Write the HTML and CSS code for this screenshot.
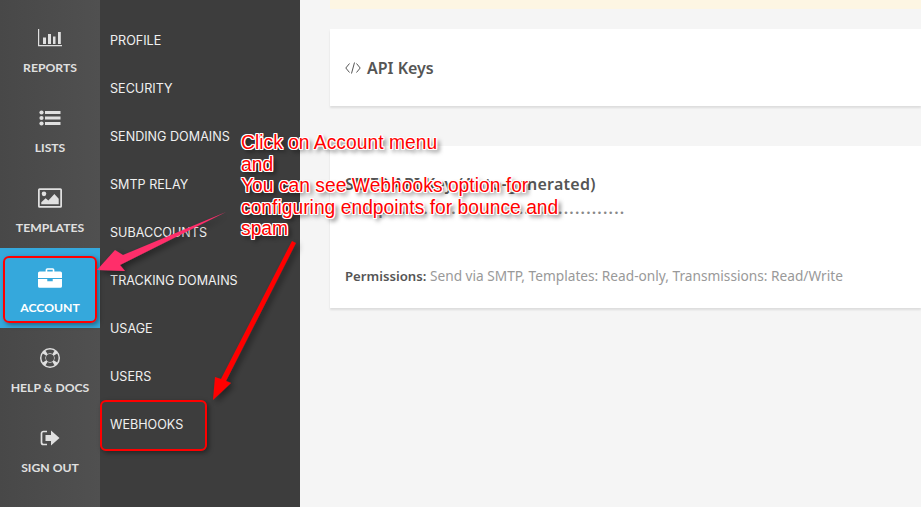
FILE: index.html
```html
<!DOCTYPE html>
<html lang="en">
<head>
<meta charset="utf-8">
<title>Account menu</title>
<link rel="stylesheet" href="styles.css">
</head>
<body>
<div class="app">
  <nav class="rail">
    <a class="rail-item">
      <svg class="rail-icon" viewBox="0 0 24 20"><path d="M0.600 1v16.700H24" fill="none" stroke="currentColor" stroke-width="1.200"/><path d="M5 9.500h3v6.500H5zM10 6h3v10h-3zM15 8.500h2.500V16H15zM20 4h2.800v12H20z" fill="currentColor"/></svg>
      <span>REPORTS</span>
    </a>
    <a class="rail-item">
      <svg class="rail-icon" viewBox="0 0 24 20"><circle cx="3.500" cy="4.500" r="2.100" fill="currentColor"/><circle cx="3.500" cy="10" r="2.100" fill="currentColor"/><circle cx="3.500" cy="15.500" r="2.100" fill="currentColor"/><path d="M7 3h15.500v3H7zM7 8.500h15.500v3H7zM7 14h15.500v3H7z" fill="currentColor"/></svg>
      <span>LISTS</span>
    </a>
    <a class="rail-item">
      <svg class="rail-icon" viewBox="0 0 22 18"><path fill-rule="evenodd" d="M1.500 0h19A1.500 1.500 0 0 1 22 1.500v15a1.500 1.500 0 0 1-1.500 1.500h-19A1.500 1.500 0 0 1 0 16.500v-15A1.500 1.500 0 0 1 1.500 0zM1.600 1.600v14.800h18.800V1.600z" fill="currentColor"/><circle cx="5.500" cy="5.200" r="2.100" fill="currentColor"/><path d="M3 14.800v-2l4-3.500 2.500 2 5.500-6 4 4.500v5z" fill="currentColor"/></svg>
      <span>TEMPLATES</span>
    </a>
    <a class="rail-item is-active">
      <svg class="rail-icon" viewBox="0 0 22 18"><path fill-rule="evenodd" d="M7 3V1.500A1.500 1.500 0 0 1 8.500 0h5A1.500 1.500 0 0 1 15 1.500V3h5.500A1.500 1.500 0 0 1 22 4.500V9H0V4.500A1.500 1.500 0 0 1 1.500 3zM8.500 1.500V3h5V1.500z" fill="currentColor"/><path d="M0 10h8.500v2h5v-2H22v6.500a1.500 1.500 0 0 1-1.500 1.500h-19A1.500 1.500 0 0 1 0 16.500z" fill="currentColor"/></svg>
      <span>ACCOUNT</span>
    </a>
    <a class="rail-item">
      <svg class="rail-icon" viewBox="0 0 20 20"><path fill-rule="evenodd" d="M10 0a10 10 0 1 1 0 20a10 10 0 0 1 0-20zM10 6a4 4 0 1 0 0 8a4 4 0 0 0 0-8zM5.500 2.800l2 3.200a5 5 0 0 1 5 0l2-3.200a9 9 0 0 0-9 0zM2.800 5.500a9 9 0 0 0 0 9l3.200-2a5 5 0 0 1 0-5zM17.200 5.500l-3.200 2a5 5 0 0 1 0 5l3.200 2a9 9 0 0 0 0-9zM7.500 14l-2 3.200a9 9 0 0 0 9 0l-2-3.200a5 5 0 0 1-5 0z" fill="currentColor"/></svg>
      <span>HELP &amp; DOCS</span>
    </a>
    <a class="rail-item">
      <svg class="rail-icon" viewBox="0 0 24 20"><path d="M9 3.500H5.500A2 2 0 0 0 3.500 5.500v9a2 2 0 0 0 2 2H9" fill="none" stroke="currentColor" stroke-width="1.700"/><path d="M13 2.500l8.500 7.500-8.500 7.500V13H7.500V7H13z" fill="currentColor"/></svg>
      <span>SIGN OUT</span>
    </a>
  </nav>
  <nav class="submenu">
    <a class="sub-item">PROFILE</a>
    <a class="sub-item">SECURITY</a>
    <a class="sub-item">SENDING DOMAINS</a>
    <a class="sub-item">SMTP RELAY</a>
    <a class="sub-item">SUBACCOUNTS</a>
    <a class="sub-item">TRACKING DOMAINS</a>
    <a class="sub-item">USAGE</a>
    <a class="sub-item">USERS</a>
    <a class="sub-item">WEBHOOKS</a>
  </nav>
  <main class="content">
    <div class="notice"></div>
    <section class="card card-head">
      <h2 class="card-title"><svg class="code-icon" viewBox="0 0 16 12"><path d="M4.500 1.500L0.800 6l3.700 4.500M11.500 1.500L15.200 6l-3.700 4.500M9.500 0.500L6.500 11.500" fill="none" stroke="currentColor" stroke-width="1"/></svg>API Keys</h2>
    </section>
    <section class="card card-key">
      <h3 class="key-name">SMTP API Key (Auto-generated)</h3>
      <p class="key-value">Ddcp..........................................</p>
      <p class="key-perms"><strong>Permissions:</strong> Send via SMTP, Templates: Read-only, Transmissions: Read/Write</p>
    </section>
  </main>
</div>
<div class="callout">Click on Account menu<br>and<br>You can see Webhooks option for<br>configuring endpoints for bounce and<br>spam</div>
<div class="mark mark-account"></div>
<div class="mark mark-webhooks"></div>
<svg class="arrows" viewBox="0 0 921 507">
  <defs>
    <filter id="drop" x="-20%" y="-20%" width="150%" height="150%"><feDropShadow dx="3" dy="3" stdDeviation="3" flood-color="#000" flood-opacity=".45"/></filter>
  </defs>
  <path d="M226 212L123 255L115 250L97 270L125 271L120 265Z" fill="#ff2d6b" filter="url(#drop)"/>
  <path d="M292 241L296 243L226 381L231 383L213 400L215 377L221 379Z" fill="#ff0000" filter="url(#drop)"/>
</svg>
</body>
</html>
```
FILE: styles.css
```css
* { box-sizing: border-box; }
html, body { margin: 0; height: 507px; overflow: hidden; }
body { position: relative; font-family: "Inter", "Liberation Sans", sans-serif; background: #f5f5f5; }
.app { display: flex; width: 921px; height: 507px; }
.rail {
  width: 100px; flex: none; padding-top: 8px;
  background: linear-gradient(90deg, #484848, #505050);
  display: flex; flex-direction: column;
}
.rail-item {
  height: 80px; display: flex; flex-direction: column; align-items: center;
  padding-top: 20px; gap: 12px; color: #e0e0e0;
  font-family: "Lato", sans-serif; font-size: 12.200px; font-weight: 700; line-height: 15px; white-space: nowrap;
}
.rail-item span { display: block; }
.rail-icon { width: 24px; height: 20px; display: block; }
.rail-item.is-active { background: #35a8dc; color: #fff; }
.submenu { width: 200px; flex: none; background: #3d3d3d; padding-top: 16px; display: flex; flex-direction: column; }
.sub-item {
  height: 48px; padding-left: 10px; display: flex; align-items: center;
  color: #f0f0f0; font-size: 12.600px; font-weight: 400; white-space: nowrap;
}
.content { flex: 1; min-width: 0; padding-left: 30px; display: flex; flex-direction: column; }
.notice { height: 9px; background: #fdf6e3; margin-bottom: 20px; }
.card { background: #fff; box-shadow: 0 2px 2px rgba(0,0,0,.1); padding-left: 15px; }
.card-head { height: 77px; display: flex; align-items: center; margin-bottom: 40px; }
.card-title { margin: 0; display: flex; align-items: center; gap: 6px; color: #555; font: 600 16px "Noto Sans", sans-serif; }
.code-icon { width: 16px; height: 12px; }
.card-key { height: 162px; padding-top: 28px; color: #555; font-family: "Noto Sans", sans-serif; }
.key-name { margin: 0; font-size: 16px; line-height: 20px; font-weight: 600; letter-spacing: .25px; }
.key-value { margin: 5px 0 0; font-size: 16px; line-height: 18px; color: #888; letter-spacing: 1.200px; font-weight: 600; white-space: nowrap; }
.key-perms { margin: 50px 0 0; font-size: 13.700px; line-height: 18px; color: #999; }
.key-perms strong { color: #555; font-size: 13.200px; font-weight: 600; }
.callout {
  position: absolute; left: 241px; top: 132px; width: 360px;
  font: 19.300px/21.500px "Liberation Sans", sans-serif; color: #f00;
  text-shadow: -1px 0 0 #fff, 1px 0 0 #fff, 0 -1px 0 #fff, 0 1px 0 #fff, -1px -1px 0 #fff, 1px 1px 0 #fff, -1px 1px 0 #fff, 1px -1px 0 #fff, 3px 3px 4px rgba(0,0,0,.7);
}
.mark { position: absolute; border: 2.500px solid #f00; border-radius: 6px; box-shadow: 2px 2px 5px rgba(0,0,0,.4); }
.mark-account { left: 3px; top: 256px; width: 94px; height: 67px; }
.mark-webhooks { left: 100px; top: 400px; width: 107px; height: 51px; }
.arrows { position: absolute; left: 0; top: 0; width: 921px; height: 507px; pointer-events: none; }
```
